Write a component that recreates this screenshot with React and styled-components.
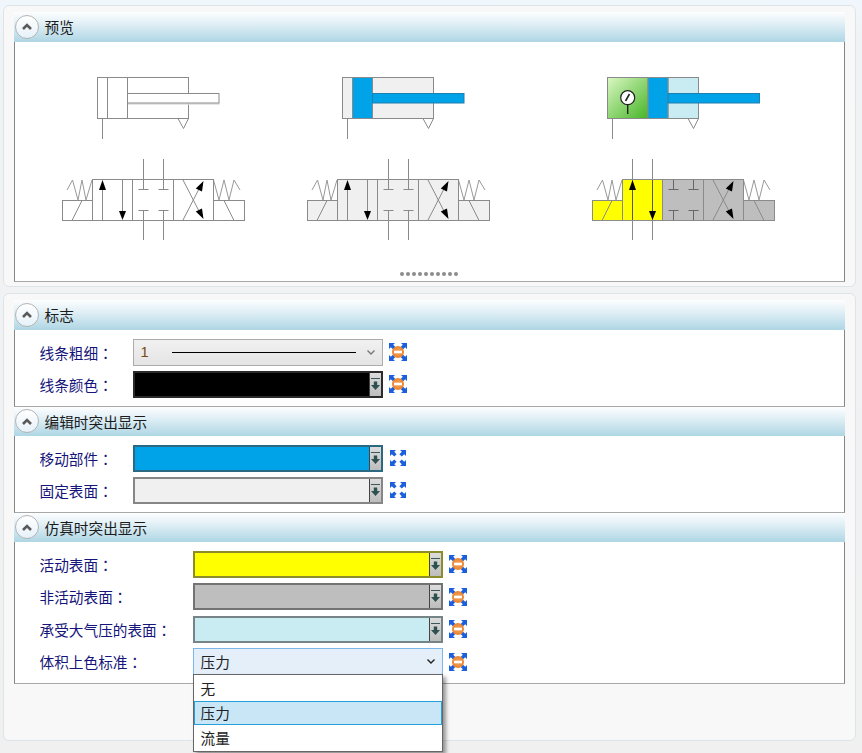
import React from "react";
import styled, { createGlobalStyle } from "styled-components";

const GlobalStyle = createGlobalStyle`
  html, body {
    margin: 0;
    padding: 0;
    background: #f0f0f0;
  }
`;

const Page = styled.div`
  width: 862px;
  height: 753px;
  box-sizing: border-box;
  padding: 5px 6px 12px 3px;
  display: flex;
  flex-direction: column;
  gap: 6px;
  overflow: hidden;
  background: linear-gradient(#f0f7fc 0, #f0f3f5 40px, #f0f0f0 100%);
  font-family: "Noto Sans CJK SC", "Liberation Sans", sans-serif;
  font-size: 14.67px;
`;

const Panel = styled.div`
  box-sizing: border-box;
  flex: ${(p) => (p.$grow ? "1" : "none")};
  height: ${(p) => (p.$grow ? "auto" : "282px")};
  padding: 5.5px 10.5px 0 9.5px;
  border: 1.5px solid #dde4e8;
  border-radius: 6px;
  background: #f8f8f8;
  display: flex;
  flex-direction: column;
`;

const Section = styled.section`
  display: flex;
  flex-direction: column;
`;

const Header = styled.div`
  height: ${(p) => p.$height || 30}px;
  box-sizing: border-box;
  display: flex;
  align-items: center;
  gap: 6px;
  padding-left: 1px;
  color: #1c1c1c;
  background: linear-gradient(#fdfeff 0%, #dcedf4 45%, #aed6e4 100%);
`;

const Toggle = styled.span`
  width: 24px;
  height: 24px;
  box-sizing: border-box;
  border: 1.5px solid #b4b4b4;
  border-radius: 50%;
  background: linear-gradient(#ffffff, #e6f1fa);
  display: flex;
  align-items: center;
  justify-content: center;
`;

const Body = styled.div`
  position: relative;
  box-sizing: border-box;
  background: #fff;
  border: 1px solid #868686;
  border-top: none;
  border-bottom: 1.5px solid #a8a8a8;
`;

const PreviewBody = styled(Body)`
  height: 240px;
  padding-top: 28px;
  display: flex;
  flex-direction: column;
`;

const PreviewGrid = styled.div`
  display: grid;
  grid-template-columns: 245px 285px 184px;
  padding-left: 47px;
`;

const Grip = styled.div`
  margin-top: auto;
  padding-bottom: 5px;
  display: flex;
  justify-content: center;
  gap: 2px;
`;

const GripDot = styled.span`
  width: 4px;
  height: 4px;
  border-radius: 50%;
  background: #8c8c8c;
`;

const FormBody = styled(Body)`
  padding: 9px 0 8px 25px;
  display: flex;
  flex-direction: column;
  gap: ${(p) => p.$gap}px;
`;

const Row = styled.div`
  display: grid;
  grid-template-columns: ${(p) => p.$labelWidth}px 250px 24px;
  align-items: center;
  height: 27px;
`;

const Label = styled.label`
  color: #14147a;
  white-space: nowrap;
`;

const Colon = styled.span`
  font-family: "Noto Sans CJK TC", sans-serif;
`;

const IconSlot = styled.span`
  display: flex;
  justify-content: center;
  padding-left: 6px;
`;

const ComboBox = styled.div`
  position: relative;
  box-sizing: border-box;
  height: 27px;
  display: flex;
  align-items: center;
  padding: 0 6px 0 7px;
  border: 1px solid ${(p) => (p.$open ? "#7ab6ea" : "#acacac")};
  background: ${(p) => (p.$open ? "#e4effa" : "linear-gradient(#f1f1f1, #e4e4e4)")};
  color: #222;
`;

const LineValue = styled.span`
  width: 24px;
  color: #7a4a10;
  font-family: "Liberation Sans", sans-serif;
`;

const LineSample = styled.span`
  width: 184px;
  height: 1px;
  margin-left: 7px;
  background: #000;
`;

const Chevron = styled.svg`
  margin-left: auto;
`;

const ColorField = styled.div`
  box-sizing: border-box;
  height: 27px;
  display: flex;
  border: 2px solid rgba(70, 70, 70, 0.62);
  background: ${(p) => p.$color};
`;

const Swatch = styled.div`
  flex: 1;
`;

const PickButton = styled.div`
  box-sizing: border-box;
  width: 12px;
  display: flex;
  align-items: center;
  justify-content: center;
  border-left: 1px solid #444;
  background: linear-gradient(#dcdcdc, #bdbdbd);
`;

const Menu = styled.ul`
  position: absolute;
  z-index: 2;
  top: 25px;
  left: -1px;
  width: 250px;
  box-sizing: border-box;
  margin: 0;
  padding: 1px 0;
  list-style: none;
  background: #fff;
  border: 1px solid #666;
  box-shadow: 3px 3px 4px rgba(0, 0, 0, 0.4);
`;

const MenuItem = styled.li`
  box-sizing: border-box;
  height: 24.5px;
  padding-left: 6px;
  display: flex;
  align-items: center;
  color: #222;
  border: 1px solid ${(p) => (p.$selected ? "#26a0da" : "transparent")};
  background: ${(p) => (p.$selected ? "#c8e6f5" : "transparent")};
`;

const LINE = "#8a8a8a";
const MOVING = "#00a2e8";
const FIXED = "#f0f0f0";
const ACTIVE = "#ffff00";
const INACTIVE = "#bebebe";
const ATMOS = "#c9ebf2";

function CollapseIcon() {
  return (
    <svg width="12" height="9" viewBox="0 0 12 9">
      <path d="M2 7 L6 3 L10 7" fill="none" stroke="#5a5a5a" strokeWidth="2.6" />
    </svg>
  );
}

function Corner({ rotate, center }) {
  return (
    <polygon
      points="0,0 6,0 4.2,1.8 6.6,4.2 4.2,6.6 1.8,4.2 0,6"
      fill="#1b5fdc"
      transform={`rotate(${rotate} ${center} ${center})`}
    />
  );
}

function ExpandIcon({ blocked }) {
  const size = blocked ? 18 : 16;
  const center = size / 2;
  return (
    <svg width={size} height={size} viewBox={`0 0 ${size} ${size}`}>
      <defs>
        <radialGradient id="blockedFill">
          <stop offset="0" stopColor="#f7a75f" />
          <stop offset="1" stopColor="#e8822e" />
        </radialGradient>
      </defs>
      {[0, 90, 180, 270].map((r) => (
        <Corner key={r} rotate={r} center={center} />
      ))}
      {blocked && (
        <>
          <circle cx={center} cy={center} r="6" fill="url(#blockedFill)" />
          <rect x={center - 4} y={center - 1.3} width="8" height="2.6" fill="#fff" />
        </>
      )}
    </svg>
  );
}

function DownChevron({ color }) {
  return (
    <Chevron width="10" height="7" viewBox="0 0 10 7">
      <path d="M1.5 1.5 L5 5 L8.5 1.5" fill="none" stroke={color} strokeWidth="1.4" />
    </Chevron>
  );
}

function PickArrow() {
  return (
    <svg width="9" height="13" viewBox="0 0 9 13">
      <rect x="0" y="0" width="9" height="1" fill="#3b5a5a" />
      <path d="M2.8 3.5 H6.2 V7 H9 L4.5 12 L0 7 H2.8 Z" fill="#2f5050" />
    </svg>
  );
}

function Cylinder({ kind, dx = 0 }) {
  const chamber = kind === "plain" ? "#fff" : FIXED;
  const pistonX = kind === "sim" ? 76 : 45.5;
  const pistonFill = kind === "plain" ? "#fff" : MOVING;
  const rodFill = kind === "plain" ? "#fff" : MOVING;
  return (
    <g transform={`translate(${dx} 0)`}>
      <path d="M40.5 48 V69" stroke={LINE} fill="none" />
      <path d="M116 48.5 L121.5 58.5 L126.5 48.5" stroke={LINE} fill="#fff" />
      <rect x="35.5" y="7.5" width="91" height="41" fill={chamber} stroke={LINE} />
      {kind === "sim" && (
        <>
          <rect x="35.5" y="7.5" width="40.5" height="41" fill="url(#gaugeChamber)" stroke={LINE} />
          <rect x="96" y="7.5" width="30.5" height="41" fill={ATMOS} stroke={LINE} />
          <path d="M55.7 33 V44" stroke="#222" strokeWidth="1.4" />
          <circle cx="55.7" cy="27.7" r="7" fill="#fff" stroke="#222" strokeWidth="1.2" />
          <path d="M53.5 31 L57.5 24" stroke="#222" strokeWidth="1.6" />
        </>
      )}
      {kind === "plain" && <path d="M45.5 7.5 V48.5" stroke={LINE} />}
      <rect x={pistonX} y="7.5" width="20" height="41" fill={pistonFill} stroke={LINE} />
      {kind === "plain" && <path d="M66 34 H157.5" stroke="#dedede" strokeWidth="1.4" />}
      <rect x={pistonX + 20} y="23.5" width="91.5" height="9.5" fill={rodFill} stroke={kind === "plain" ? LINE : "#1f7fae"} />
    </g>
  );
}

function ValveBox({ x, y = 109.5, w, h = 41, fill }) {
  return <rect x={x} y={y} width={w} height={h} fill={fill} stroke={LINE} />;
}

function Valve({ fills, activeLeft }) {
  const [solL, box1, box2, box3, solR] = fills;
  const topPorts = activeLeft ? [40.5, 60.5] : [81.5, 101.5];
  const stubs = [81.5, 101.5];
  return (
    <g>
      <polyline points="5,120 10.5,110 16,130 20,110 24,130 30,110" fill="none" stroke="#999" />
      <polyline points="151.5,110 157,130 162,110 167,130 172,110 178,120" fill="none" stroke="#999" />
      <ValveBox x={0.5} y={130.5} w={30} h={20} fill={solL} />
      <ValveBox x={151.5} y={130.5} w={31} h={20} fill={solR} />
      <path d="M10 150.5 L20 130.5 M162 130.5 L172 150.5" stroke={LINE} fill="none" />
      <ValveBox x={30.5} w={40} fill={box1} />
      <ValveBox x={70.5} w={41} fill={box2} />
      <ValveBox x={111.5} w={40} fill={box3} />

      {topPorts.map((x) => (
        <path key={x} d={`M${x} 89 V120 M${x} 140 V170`} stroke={LINE} fill="none" />
      ))}
      {stubs.map((x) => (
        <path
          key={x}
          d={activeLeft
            ? `M${x} 110 V119.5 M${x - 5} 119.5 H${x + 5} M${x - 5} 140.5 H${x + 5} M${x} 140.5 V150`
            : `M${x - 5} 119.5 H${x + 5} M${x - 5} 140.5 H${x + 5}`}
          stroke={activeLeft ? "#666" : LINE}
          fill="none"
        />
      ))}

      <path d="M40.5 150 V118 M60.5 110 V142" stroke={activeLeft ? "#555" : LINE} fill="none" />
      <polygon points="40.5,110 37,120 44,120" fill="#000" />
      <polygon points="60.5,150 57,141 64,141" fill="#000" />
      <path d="M121 110 L138 143 M121 150 L138 117" stroke={LINE} fill="none" />
      <polygon points="141.5,111 140,121.6 133.8,118.4" fill="#000" />
      <polygon points="141.5,149 140,138.4 133.8,141.6" fill="#000" />
    </g>
  );
}

function Preview({ children }) {
  return (
    <svg width="184" height="175" viewBox="0 0 184 175">
      <defs>
        <linearGradient id="gaugeChamber" x1="0" y1="0" x2="1" y2="1">
          <stop offset="0" stopColor="#dbf7c4" />
          <stop offset="1" stopColor="#45b526" />
        </linearGradient>
      </defs>
      {children}
    </svg>
  );
}

function FieldLabel({ text }) {
  return (
    <Label>
      {text}
      <Colon>：</Colon>
    </Label>
  );
}

function ColorRow({ label, labelWidth, color, blocked }) {
  return (
    <Row $labelWidth={labelWidth}>
      <FieldLabel text={label} />
      <ColorField $color={color}>
        <Swatch />
        <PickButton>
          <PickArrow />
        </PickButton>
      </ColorField>
      <IconSlot>
        <ExpandIcon blocked={blocked} />
      </IconSlot>
    </Row>
  );
}

function SectionHead({ title, height }) {
  return (
    <Header $height={height}>
      <Toggle>
        <CollapseIcon />
      </Toggle>
      {title}
    </Header>
  );
}

export default function App() {
  const options = ["无", "压力", "流量"];
  return (
    <Page>
      <GlobalStyle />
      <Panel>
        <Section>
          <SectionHead title="预览" />
          <PreviewBody>
            <PreviewGrid>
              <Preview>
                <Cylinder kind="plain" />
                <Valve fills={["#fff", "#fff", "#fff", "#fff", "#fff"]} />
              </Preview>
              <Preview>
                <Cylinder kind="edit" />
                <Valve fills={[FIXED, FIXED, FIXED, FIXED, FIXED]} />
              </Preview>
              <Preview>
                <Cylinder kind="sim" dx={-20} />
                <Valve fills={[ACTIVE, ACTIVE, INACTIVE, INACTIVE, INACTIVE]} activeLeft />
              </Preview>
            </PreviewGrid>
            <Grip>
              {Array.from({ length: 10 }).map((_, i) => (
                <GripDot key={i} />
              ))}
            </Grip>
          </PreviewBody>
        </Section>
      </Panel>

      <Panel $grow>
        <Section>
          <SectionHead title="标志" />
          <FormBody $gap={5}>
            <Row $labelWidth={93}>
              <FieldLabel text="线条粗细" />
              <ComboBox>
                <LineValue>1</LineValue>
                <LineSample />
                <DownChevron color="#777" />
              </ComboBox>
              <IconSlot>
                <ExpandIcon blocked />
              </IconSlot>
            </Row>
            <ColorRow label="线条颜色" labelWidth={93} color="#000" blocked />
          </FormBody>
        </Section>

        <Section>
          <SectionHead title="编辑时突出显示" height={29} />
          <FormBody $gap={5}>
            <ColorRow label="移动部件" labelWidth={93} color={MOVING} />
            <ColorRow label="固定表面" labelWidth={93} color={FIXED} />
          </FormBody>
        </Section>

        <Section>
          <SectionHead title="仿真时突出显示" height={29} />
          <FormBody $gap={5.5}>
            <ColorRow label="活动表面" labelWidth={153} color={ACTIVE} blocked />
            <ColorRow label="非活动表面" labelWidth={153} color={INACTIVE} blocked />
            <ColorRow label="承受大气压的表面" labelWidth={153} color={ATMOS} blocked />
            <Row $labelWidth={153}>
              <FieldLabel text="体积上色标准" />
              <ComboBox $open>
                压力
                <DownChevron color="#222" />
                <Menu>
                  {options.map((o) => (
                    <MenuItem key={o} $selected={o === "压力"}>
                      {o}
                    </MenuItem>
                  ))}
                </Menu>
              </ComboBox>
              <IconSlot>
                <ExpandIcon blocked />
              </IconSlot>
            </Row>
          </FormBody>
        </Section>
      </Panel>
    </Page>
  );
}
